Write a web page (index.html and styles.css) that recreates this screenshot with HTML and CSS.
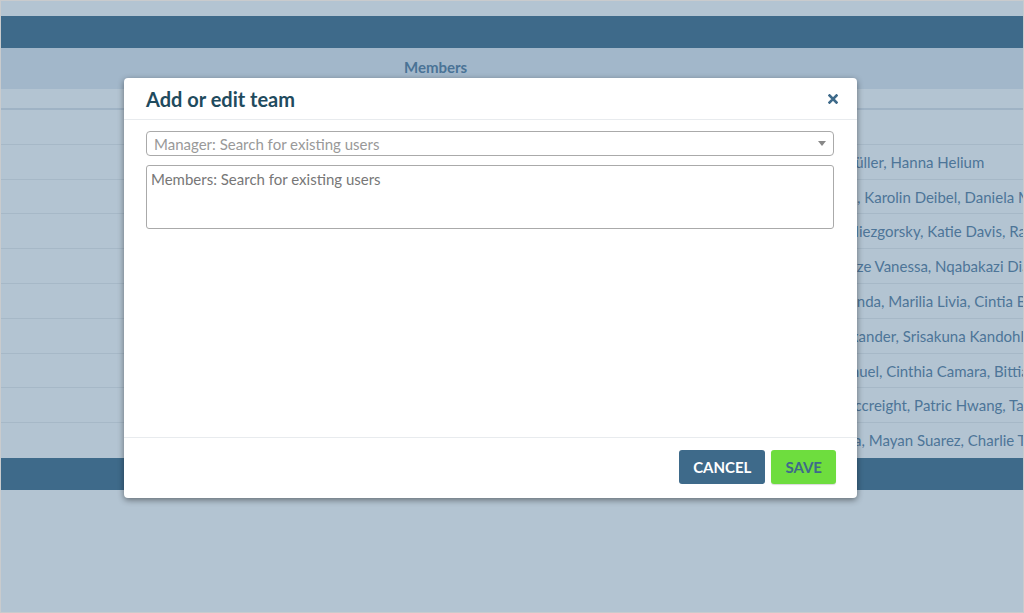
FILE: index.html
```html
<!DOCTYPE html>
<html lang="en">
<head>
  <meta charset="UTF-8" />
  <meta name="viewport" content="width=device-width, initial-scale=1" />
  <title>Teams</title>
  <link rel="stylesheet" href="styles.css">
</head>
<body>
  <div class="page">
    <div class="topbar"></div>

    <div class="teams">
      <div class="teams-head">
        <div class="col-team"></div>
        <div class="col-members">Members</div>
      </div>
      <div class="teams-filter"></div>

      <div class="team-row"><div class="col-team"></div><div class="col-members">Lena Hoffmann</div></div>
      <div class="team-row"><div class="col-team"></div><div class="col-members">Jonas Becker, Sophie Wagner, Nora Vogels, Lukas Schneider, Peter Müller, Hanna Helium</div></div>
      <div class="team-row"><div class="col-team"></div><div class="col-members">Julia Kramer, Markus Schulz, Ben Ott, Felix Wolf, Jan Eckl, Tim Brown, Karolin Deibel, Daniela Meyer</div></div>
      <div class="team-row"><div class="col-team"></div><div class="col-members">Tomasz Kowalski, Marte Nowak, Leo Rios, Piotr Zielinski, Agnieszka Niezgorsky, Katie Davis, Rana Patel</div></div>
      <div class="team-row"><div class="col-team"></div><div class="col-members">Thabo Nkosi, Sipho Zulu, Nora Vogel, Ayanda Khumalo, Lindiwe Mkhize Vanessa, Nqabakazi Diale</div></div>
      <div class="team-row"><div class="col-team"></div><div class="col-members">Bruno Costa, Fernanda Lima, Nora Vogelsang, Rafael Souza, Ana Miranda, Marilia Livia, Cintia Barros</div></div>
      <div class="team-row"><div class="col-team"></div><div class="col-members">Nimal Perera, Kasun Silva, Nora Vogelsang, Dilan Fernando, Ruth Alexander, Srisakuna Kandohlage</div></div>
      <div class="team-row"><div class="col-team"></div><div class="col-members">Rita Sousa, Tiago Santos, Ben Ott, Max Roth, Ines Ferreira, Lucas Manuel, Cinthia Camara, Bittia Rocha</div></div>
      <div class="team-row"><div class="col-team"></div><div class="col-members">Emily Clark, Ryan Moore, Tom Haas, Mia Frank, Grace Turner, Joan Mccreight, Patric Hwang, Taha Karim</div></div>
      <div class="team-row"><div class="col-team"></div><div class="col-members">Lucia Garcia, Pablo Ortiz, Max Roth, Nora Vogel, Elena Ruiz, Sara Pena, Mayan Suarez, Charlie Teller</div></div>
    </div>

    <div class="bottombar"></div>

    <div class="modal">
      <div class="modal-header">
        <h2>Add or edit team</h2>
        <button class="close" aria-label="Close">
          <svg width="10" height="10" viewBox="0 0 10 10">
            <path d="M1.5 1.5 L8.5 8.5 M8.5 1.5 L1.5 8.5" stroke="currentColor" stroke-width="2.6" stroke-linecap="square" />
          </svg>
        </button>
      </div>
      <div class="modal-body">
        <div class="select">
          <span class="placeholder">Manager: Search for existing users</span>
          <span class="arrow"></span>
        </div>
        <div class="multi">Members: Search for existing users</div>
      </div>
      <div class="modal-footer">
        <button class="btn btn-cancel">Cancel</button>
        <button class="btn btn-save">Save</button>
      </div>
    </div>
  </div>
</body>
</html>
```

FILE: styles.css
```css
body {
  margin: 0;
  background-color: #b3c4d2;
  font-family: Lato, 'Open Sans', sans-serif;
}
.page {
  position: relative;
  height: 613px;
  box-sizing: border-box;
  border: 1px solid #c9cbcd;
  overflow: hidden;
}
.topbar {
  margin-top: 15px;
  height: 32px;
  background-color: #3e6a8a;
}
.teams-head {
  display: flex;
  height: 41px;
  background-color: #a2b7ca;
  color: #4a7396;
  font-weight: bold;
  font-size: 15px;
  line-height: 39px;
}
.col-team {
  width: 403px;
  flex: none;
}
.col-members {
  white-space: nowrap;
}
.teams-filter {
  height: 19px;
  border-bottom: 2px solid #9fb3c5;
}
.team-row {
  display: flex;
  height: 34.8px;
  box-sizing: border-box;
  border-bottom: 1px solid #a6b8c7;
  color: #4d7598;
  font-size: 15px;
  line-height: 34px;
}
.team-row:first-of-type {
  height: 36px;
}
.team-row:last-child {
  border-bottom: none;
}
.bottombar {
  height: 32px;
  background-color: #3e6a8a;
}

/* dialog */
.modal {
  position: absolute;
  left: 123px;
  top: 77px;
  width: 733px;
  height: 420px;
  display: flex;
  flex-direction: column;
  background-color: #fff;
  border-radius: 4px;
  box-shadow: 0 2px 6px rgba(0,0,0,0.45);
}
.modal-header {
  display: flex;
  align-items: center;
  justify-content: space-between;
  height: 42px;
  padding: 0 17px 0 22px;
  border-bottom: 1px solid #e8ebee;
  box-sizing: border-box;
}
.modal-header h2 {
  margin: 0;
  font-size: 20px;
  font-weight: bold;
  color: #1f4b5e;
}
.close {
  border: none;
  background: none;
  padding: 0;
  width: 14px;
  height: 14px;
  color: #3e6a8a;
  cursor: pointer;
}
.modal-body {
  flex: 1;
  padding: 11px 23px 11px 22px;
}
.select {
  display: flex;
  align-items: center;
  justify-content: space-between;
  height: 25px;
  padding: 0 7px;
  border: 1px solid #aaa;
  border-radius: 4px;
  box-sizing: border-box;
  font-size: 15px;
}
.placeholder {
  color: #999;
}
.arrow {
  width: 0;
  height: 0;
  border-left: 4px solid transparent;
  border-right: 4px solid transparent;
  border-top: 5px solid #888;
}
.multi {
  margin-top: 9px;
  height: 64px;
  padding: 4px 4px;
  border: 1px solid #aaa;
  border-radius: 3px;
  box-sizing: border-box;
  font-size: 15px;
  color: #777;
}
.modal-footer {
  display: flex;
  justify-content: flex-end;
  gap: 6px;
  height: 61px;
  padding: 12px 21px 0 0;
  border-top: 1px solid #e8ebee;
  box-sizing: border-box;
}
.btn {
  height: 34px;
  padding: 0 14px;
  border: none;
  border-radius: 3px;
  font-family: Lato, sans-serif;
  font-size: 15px;
  font-weight: bold;
  text-transform: uppercase;
  cursor: pointer;
}
.btn-cancel {
  background-color: #3e6a8a;
  color: #fff;
}
.btn-save {
  background-color: #6edd3e;
  color: #3e6a8a;
  box-shadow: 0 1px 1px rgba(0,0,0,0.15);
}
```
